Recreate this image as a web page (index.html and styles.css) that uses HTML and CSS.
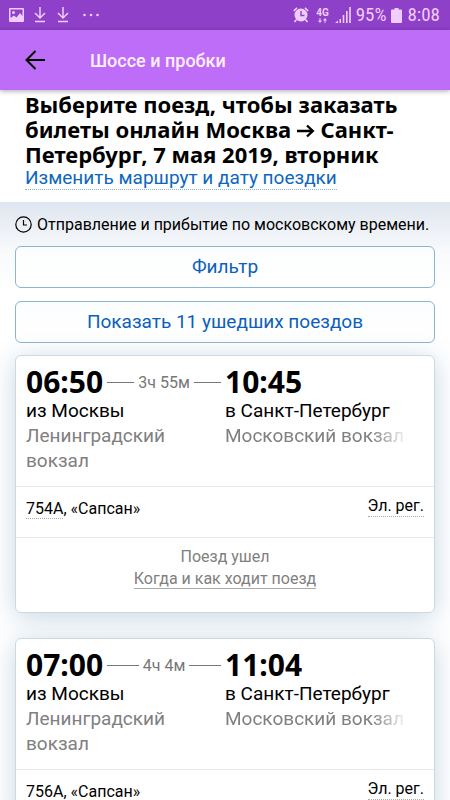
FILE: index.html
```html
<!DOCTYPE html>
<html lang="ru">
<head>
<meta charset="utf-8">
<meta name="viewport" content="width=device-width, initial-scale=1">
<title>Шоссе и пробки</title>
<link rel="stylesheet" href="styles.css">
</head>
<body>
<div class="status">
  <div class="status-group">
    <svg width="15" height="14" viewBox="0 0 15 14" aria-hidden="true"><path fill="currentColor" fill-rule="evenodd" d="M1 0h13a1 1 0 0 1 1 1v12a1 1 0 0 1-1 1H1a1 1 0 0 1-1-1V1a1 1 0 0 1 1-1zM1.500 1.500V10L5 7.500 7.500 9.500 11 5l2.500 3V1.500zM4.500 3a1.500 1.500 0 1 1 0 3 1.500 1.500 0 0 1 0-3z"/></svg>
    <svg class="download" width="12" height="16" viewBox="0 0 12 16" aria-hidden="true"><path fill="none" stroke="currentColor" stroke-width="1.500" d="M6 0v11M1 6l5 5 5-5M1 14.500h10"/></svg>
    <svg class="download" width="12" height="16" viewBox="0 0 12 16" aria-hidden="true"><path fill="none" stroke="currentColor" stroke-width="1.500" d="M6 0v11M1 6l5 5 5-5M1 14.500h10"/></svg>
    <svg class="more" width="16" height="4" viewBox="0 0 16 4" aria-hidden="true"><g fill="currentColor"><circle cx="1.500" cy="2" r="1.300"/><circle cx="8" cy="2" r="1.300"/><circle cx="14.500" cy="2" r="1.300"/></g></svg>
  </div>
  <div class="status-group status-right">
    <svg width="16" height="16" viewBox="0 0 16 16" aria-hidden="true"><circle cx="8" cy="8" r="6.500" fill="currentColor"/><path fill="none" stroke="currentColor" stroke-width="1.600" d="M.8 4L4 .9M12 .9L15.200 4M3.500 12.500l-2 2.500M12.500 12.500l2 2.500"/><path fill="none" stroke="#8f40c8" stroke-width="1.400" d="M8 4v4.500h3.500"/></svg>
    <span class="network"><span>4G</span><svg width="9" height="5" viewBox="0 0 9 5" aria-hidden="true"><path fill="currentColor" d="M1.500 0h1v2.500H4L2 5 0 2.500h1.500zM6.500 5h1V2.500H9L7 0 5 2.500h1.500z"/></svg></span>
    <svg width="16" height="16" viewBox="0 0 16 16" aria-hidden="true"><path fill="currentColor" d="M0 16l3-2.500V16zM4.500 12H6v4H4.500zM7.700 8h1.600v8H7.700zM11 4h1.600v12H11zM14.200 0h1.600v16h-1.600z"/></svg>
    <span class="reading">95%</span>
    <svg width="11" height="15" viewBox="0 0 11 15" aria-hidden="true"><path fill="currentColor" d="M3.500 0h4v1.500H10a1 1 0 0 1 1 1V14a1 1 0 0 1-1 1H1a1 1 0 0 1-1-1V2.500a1 1 0 0 1 1-1h2.500z"/></svg>
    <span class="reading">8:08</span>
  </div>
</div>
<header class="bar">
  <button class="back" type="button" aria-label="Назад"><svg width="20" height="20" viewBox="0 0 20 20" aria-hidden="true"><path fill="none" stroke="#000" stroke-width="2" d="M20 10H2M10.500 1L1.500 10l9 9"/></svg></button>
  <span class="bar-title">Шоссе и пробки</span>
</header>
<main class="content">
  <section class="intro">
    <h1>Выберите поезд, чтобы заказать<br>билеты онлайн Москва <svg class="arrow" width="18" height="14" viewBox="0 0 18 14" role="img" aria-label="до"><path fill="none" stroke="currentColor" stroke-width="2.400" d="M0 7h15.500M10 1.500L15.800 7 10 12.500"/></svg> Санкт-<br>Петербург, 7 мая 2019, вторник</h1>
    <a class="change" href="#">Изменить маршрут и дату поездки</a>
  </section>
  <section class="results">
    <p class="notice"><svg width="17" height="17" viewBox="0 0 17 17" aria-hidden="true"><circle cx="8.500" cy="8.500" r="7.700" fill="none" stroke="currentColor" stroke-width="1.200"/><path fill="none" stroke="currentColor" stroke-width="1.200" d="M8.500 4v5H12"/></svg><span>Отправление и прибытие по московскому времени.</span></p>
    <button class="action" type="button">Фильтр</button>
    <button class="action" type="button">Показать 11 ушедших поездов</button>

    <article class="train">
      <div class="route">
        <div class="from">
          <div class="departure"><time class="time">06:50</time><span class="duration">3ч 55м</span></div>
          <div>из Москвы</div>
          <div class="station">Ленинградский вокзал</div>
        </div>
        <div class="to">
          <time class="time">10:45</time>
          <div>в Санкт-Петербург</div>
          <div class="station fade">Московский вокзал</div>
        </div>
      </div>
      <div class="details"><span><a class="number" href="#">754А</a>, «Сапсан»</span><a class="number registration" href="#">Эл. рег.</a></div>
      <div class="gone"><div>Поезд ушел</div><a href="#">Когда и как ходит поезд</a></div>
    </article>

    <article class="train">
      <div class="route">
        <div class="from">
          <div class="departure"><time class="time">07:00</time><span class="duration">4ч 4м</span></div>
          <div>из Москвы</div>
          <div class="station">Ленинградский вокзал</div>
        </div>
        <div class="to">
          <time class="time">11:04</time>
          <div>в Санкт-Петербург</div>
          <div class="station fade">Московский вокзал</div>
        </div>
      </div>
      <div class="details"><span><a class="number" href="#">756А</a>, «Сапсан»</span><a class="number registration" href="#">Эл. рег.</a></div>
    </article>
  </section>
</main>
</body>
</html>
```
FILE: styles.css
```css
* { box-sizing: border-box; }

body {
  margin: 0;
  height: 100vh;
  display: flex;
  flex-direction: column;
  overflow: hidden;
  background: #fff;
  color: #000;
  font: 19px/25px Roboto, "Liberation Sans", sans-serif;
}

h1, p { margin: 0; }
a { color: inherit; text-decoration: none; }
svg { flex: none; display: block; }

.status {
  flex: none;
  display: flex;
  align-items: center;
  justify-content: space-between;
  height: 30px;
  padding: 0 10px 0 9px;
  background: #8f40c8;
  color: #efcdfc;
}
.status-group { display: flex; align-items: center; }
.download { margin-left: 10px; }
.download + .download { margin-left: 11px; }
.more { margin-left: 14px; }
.status-right { gap: 5px; }
.network {
  display: flex;
  flex-direction: column;
  align-items: center;
  width: 14px;
  margin-left: 2px;
  font-size: 10px;
  font-weight: 700;
  line-height: 10px;
}
.reading { font: 19px/30px "Roboto Condensed", Roboto, sans-serif; }

.bar {
  position: relative;
  z-index: 1;
  flex: none;
  display: flex;
  align-items: center;
  height: 60px;
  padding: 0 25px;
  background: #bd6df8;
  box-shadow: 0 1px 5px rgba(0, 0, 0, .35);
}
.back { padding: 0; border: 0; background: none; }
.bar-title { margin-left: 45px; color: #fff0ff; font-size: 18px; font-weight: 500; }

.content { flex: 1; min-height: 0; overflow-y: auto; scrollbar-width: none; }

.intro { padding: 2px 25px 12px; }
h1 { font: 700 22px/25px "Noto Sans", "Open Sans", sans-serif; white-space: nowrap; }
.arrow { display: inline-block; }
.change {
  display: block;
  width: fit-content;
  border-bottom: 1px dotted #82b7d3;
  color: #0d67bd;
  line-height: 22px;
}

.results {
  display: flex;
  flex-direction: column;
  padding: 10px 15px 25px;
  background: linear-gradient(#dfe6ef, #f8fafc 50px, #fff 90px, #fff);
}
.notice { display: flex; align-items: center; gap: 5px; font-size: 16px; white-space: nowrap; }
.action {
  height: 42px;
  margin-top: 13px;
  padding: 0 0 2px;
  border: 1px solid #8bb5d8;
  border-radius: 6px;
  background: linear-gradient(#fcfdfe, #fff);
  color: #0b60bb;
  font: inherit;
}
.notice + .action { margin-top: 9px; }

.train {
  margin-top: 25px;
  border: 1px solid #cbdae2;
  border-radius: 6px;
  background: #fff;
  box-shadow: 0 4px 26px rgba(80, 130, 165, .32);
}
.action + .train { margin-top: 12px; }
.route { display: flex; padding: 10px 10px 13px; }
.from { width: 50%; padding-right: 4px; }
.to { width: 50%; }
.time { display: block; font: 700 30px/32px "Noto Sans", "Open Sans", sans-serif; }
.departure { display: flex; align-items: center; gap: 4px; }
.duration {
  flex: 1;
  display: flex;
  align-items: center;
  gap: 4px;
  color: #777;
  font-size: 16px;
  white-space: nowrap;
}
.duration::before, .duration::after { content: ""; flex: 1; border-top: 1px solid #777; }
.station { color: #808080; }
.from .station { width: 150px; }
.fade {
  width: 184px;
  white-space: nowrap;
  -webkit-mask-image: linear-gradient(90deg, #000 80%, transparent);
  mask-image: linear-gradient(90deg, #000 80%, transparent);
}
.details {
  display: flex;
  justify-content: space-between;
  align-items: flex-start;
  padding: 9px 10px;
  border-top: 1px solid #e4e7e8;
  font-size: 16px;
  line-height: 20px;
}
.details > span { padding: 3px 0 9px; }
.number { border-bottom: 1px dotted #aaa; }
.gone {
  padding: 8px 10px 22px;
  border-top: 1px solid #e4e7e8;
  color: #808080;
  font-size: 16px;
  line-height: 22px;
  text-align: center;
}
.gone a { border-bottom: 1px solid #aaa; }
```
